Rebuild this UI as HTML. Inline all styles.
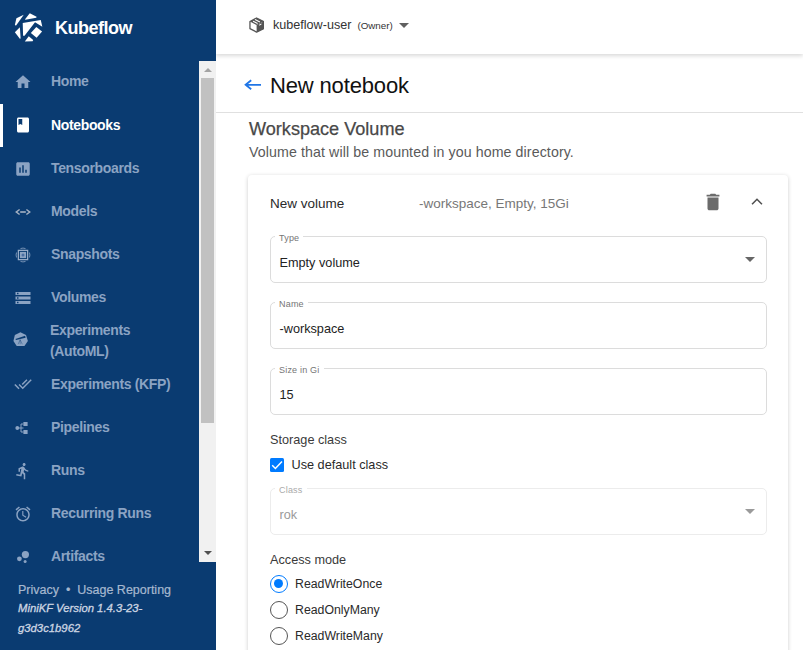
<!DOCTYPE html>
<html><head><meta charset="utf-8">
<style>
*{box-sizing:border-box;margin:0;padding:0}
html,body{width:803px;height:650px;overflow:hidden;background:#fff;font-family:"Liberation Sans",sans-serif;}
#side{position:absolute;left:0;top:0;width:216px;height:650px;background:#0a3b71;}
#main{position:absolute;left:216px;top:0;width:587px;height:650px;background:#fff;overflow:hidden}
.abs{position:absolute;white-space:nowrap}
.nav{position:absolute;left:51px;color:#8ba3c3;font-size:14px;font-weight:bold;white-space:nowrap;line-height:21px;letter-spacing:-0.35px}
.nav.act{color:#fff}
.ico{position:absolute;fill:#8ba3c3}
#sb{position:absolute;left:199px;top:61px;width:17px;height:501px;background:#f1f1f1}
#sb .thumb{position:absolute;left:2px;top:17px;width:13px;height:345px;background:#c1c1c1}

.fld{position:absolute;left:54px;width:497px;height:47px;border:1px solid #dcdcdc;border-radius:5px;background:#fff}
.fld .lb{position:absolute;left:4px;top:-5px;padding:0 4px;background:#fff;font-size:9px;line-height:12px;color:#757575;letter-spacing:.2px}
.fld .val{position:absolute;left:8.500px;top:17px;font-size:12.700px;line-height:18px;color:#222}
.fld .arr{position:absolute;left:474px;top:20px;width:0;height:0;border-left:5px solid transparent;border-right:5px solid transparent;border-top:5px solid #666}
.dis .lb{color:#aaa}.dis .val{color:#9a9a9a}.dis{border-color:#ececec}.dis .arr{border-top-color:#9a9a9a}
.t13{position:absolute;font-size:12.700px;line-height:18px;color:#2a2a2a;white-space:nowrap}
.radio{position:absolute;left:54px;width:18px;height:18px;border:1.500px solid #555;border-radius:50%;background:#fff}
.radio.on{border-color:#007bff}
.radio.on::after{content:"";position:absolute;left:3px;top:3px;width:9px;height:9px;border-radius:50%;background:#007bff}
</style></head><body>
<div id="side">
  <div class="abs" style="left:55px;top:15px;color:#fff;font-size:18px;font-weight:bold;line-height:26px;letter-spacing:-0.5px">Kubeflow</div>
  <div class="abs" style="left:0;top:104px;width:3px;height:43px;background:#fff"></div>
  <div class="nav" style="top:71px">Home</div>
  <div class="nav act" style="top:115px">Notebooks</div>
  <div class="nav" style="top:158px">Tensorboards</div>
  <div class="nav" style="top:201px">Models</div>
  <div class="nav" style="top:244px">Snapshots</div>
  <div class="nav" style="top:287px">Volumes</div>
  <div class="nav" style="top:320px;left:50px">Experiments<br>(AutoML)</div>
  <div class="nav" style="top:374px">Experiments (KFP)</div>
  <div class="nav" style="top:417px">Pipelines</div>
  <div class="nav" style="top:460px">Runs</div>
  <div class="nav" style="top:503px">Recurring Runs</div>
  <div class="nav" style="top:546px">Artifacts</div>
  <div class="abs" style="left:18px;top:581px;color:#a6b8cf;font-size:12.500px;line-height:18px;-webkit-text-stroke:0.2px #a6b8cf">Privacy &nbsp;•&nbsp; Usage Reporting</div>
  <div class="abs" style="left:18px;top:598px;color:#cdd6e3;-webkit-text-stroke:0.3px #cdd6e3;font-size:11.300px;line-height:20px;font-style:italic">MiniKF Version 1.4.3-23-<br>g3d3c1b962</div>
  <svg class="abs" style="left:12px;top:10px" width="34" height="34" viewBox="0 0 650 650" fill="#fff">
<polygon points="55,282 85,158 225,93 75,300"/>
<polygon points="250,178 340,62 470,130 465,150 255,187"/>
<polygon points="205,250 550,190 580,322 440,232 240,490 212,490"/>
<polygon points="360,440 465,325 575,410 470,530"/>
<polygon points="245,602 320,500 405,575 395,597"/>
<polygon points="55,425 150,330 165,545 150,550"/>
</svg>
  <svg class="abs" style="left:14px;top:73px" width="18" height="18" viewBox="0 0 24 24" fill="#8ba3c3"><path d="M10 20v-6h4v6h5v-8h3L12 3 2 12h3v8z"/></svg>
  <svg class="abs" style="left:14px;top:116px" width="18" height="18" viewBox="0 0 24 24" fill="#fff"><path d="M18 2H6c-1.100 0-2 .900-2 2v16c0 1.100.900 2 2 2h12c1.100 0 2-.900 2-2V4c0-1.100-.900-2-2-2zM6 4h5v8l-2.500-1.500L6 12V4z"/></svg>
  <svg class="abs" style="left:14px;top:160px" width="18" height="18" viewBox="0 0 24 24" fill="#8ba3c3"><path d="M19 3H5c-1.100 0-2 .900-2 2v14c0 1.100.900 2 2 2h14c1.100 0 2-.900 2-2V5c0-1.100-.900-2-2-2zM9 17H7v-7h2v7zm4 0h-2V7h2v10zm4 0h-2v-4h2v4z"/></svg>
  <svg class="abs" style="left:14px;top:203px" width="18" height="18" viewBox="0 0 18 18"><path d="M5.600,6.500 L2.300,9 L5.600,11.500 M12.400,6.500 L15.700,9 L12.400,11.500" stroke="#a5b1c2" stroke-width="1.500" fill="none"/><rect x="6.200" y="8.200" width="5.600" height="1.600" fill="#a5b1c2"/></svg>
  <svg class="abs" style="left:14px;top:246px" width="18" height="18" viewBox="0 0 18 18"><rect x="4.350" y="4.350" width="9.300" height="9.300" fill="none" stroke="#9db1cc" stroke-width="1.200"/><rect x="5.900" y="5.900" width="6.200" height="6.200" fill="#8ba3c3"/><circle cx="9" cy="9" r="1.500" fill="#4a6fa3"/><path d="M6.50,2.57 A6.9,6.9 0 0 1 11.50,2.57 M6.50,15.43 A6.9,6.9 0 0 0 11.50,15.43 M2.57,6.50 A6.9,6.9 0 0 0 2.57,11.50 M15.43,6.50 A6.9,6.9 0 0 1 15.43,11.50" fill="none" stroke="#7f98ba" stroke-width="0.900"/></svg>
  <svg class="abs" style="left:14px;top:289px" width="18" height="18" viewBox="0 0 24 24" fill="#8ba3c3"><path d="M2 20h20v-4H2v4zm2-3h2v2H4v-2zM2 4v4h20V4H2zm4 3H4V5h2v2zm-4 7h20v-4H2v4zm2-3h2v2H4v-2z"/></svg>
  <svg class="abs" style="left:13.400px;top:332.300px" width="15.200" height="14.400" viewBox="90 200 245 232" fill="#8ba3c3">
<polygon points="210,205 300,248 330,345 275,427 150,427 97,345 120,250"/>
<polygon points="130,314 285,262 294,294 138,328" fill="#0a3b71"/>
<path d="M205,325 L172,398 M205,325 L205,398 M205,325 L240,398" stroke="#0a3b71" stroke-width="6" fill="none"/>
</svg>
  <svg class="abs" style="left:14px;top:375px" width="18" height="18" viewBox="0 0 24 24" fill="#8ba3c3"><path d="M18 7l-1.410-1.410-6.340 6.340 1.410 1.410L18 7zm4.240-1.410L11.660 16.170 7.480 12l-1.410 1.410L11.660 19l12-12-1.420-1.410zM.410 13.410L6 19l1.410-1.410L1.830 12 .410 13.410z"/></svg>
  <svg class="abs" style="left:14px;top:419px" width="18" height="18" viewBox="0 0 18 18" fill="#8ba3c3">
<circle cx="3.300" cy="9" r="1.900"/><rect x="9.400" y="3" width="4.200" height="4"/><rect x="9.400" y="11" width="4.200" height="4"/>
<path d="M3 9H9.500M7 5H9.500M7 13H9.500M7 5V13" stroke="#8ba3c3" stroke-width="1" fill="none"/>
</svg>
  <svg class="abs" style="left:14px;top:462px" width="18" height="18" viewBox="0 0 24 24" fill="#8ba3c3"><path d="M13.490 5.480c1.100 0 2-.900 2-2s-.900-2-2-2-2 .900-2 2 .900 2 2 2zm-3.600 13.900l1-4.400 2.100 2v6h2v-7.500l-2.100-2 .600-3c1.300 1.500 3.300 2.500 5.500 2.500v-2c-1.900 0-3.500-1-4.300-2.400l-1-1.600c-.400-.600-1-1-1.700-1-.300 0-.500.100-.800.100l-5.200 2.200v4.700h2v-3.400l1.800-.700-1.600 8.100-4.900-1-.400 2 7 1.400z"/></svg>
  <svg class="abs" style="left:14px;top:505px" width="18" height="18" viewBox="0 0 24 24" fill="#8ba3c3"><path d="M22 5.720l-4.600-3.860-1.290 1.530 4.600 3.860L22 5.720zM7.880 3.390L6.600 1.860 2 5.710l1.290 1.530 4.590-3.850zM12.500 8H11v6l4.750 2.850.750-1.230-4-2.370V8zM12 4c-4.970 0-9 4.030-9 9s4.020 9 9 9c4.970 0 9-4.030 9-9s-4.030-9-9-9zm0 16c-3.870 0-7-3.130-7-7s3.130-7 7-7 7 3.130 7 7-3.130 7-7 7z"/></svg>
  <svg class="abs" style="left:14px;top:548px" width="18" height="18" viewBox="0 0 24 24" fill="#8ba3c3"><circle cx="7.200" cy="14.400" r="3.200"/><circle cx="14.800" cy="18" r="2"/><circle cx="15.200" cy="8.800" r="4.800"/></svg>
  <div id="sb"><div class="thumb"></div><div class="abs" style="left:5px;top:7px;border-left:4px solid transparent;border-right:4px solid transparent;border-bottom:4px solid #a3a3a3"></div><div class="abs" style="left:5px;top:490px;border-left:4px solid transparent;border-right:4px solid transparent;border-top:4px solid #505050"></div></div>
</div>
<div id="main">
  <div id="topbar" class="abs" style="left:0;top:0;width:587px;height:54px;background:#fff;box-shadow:0 2px 4px rgba(0,0,0,.15)"></div>
  <div class="abs" style="left:57px;top:16px;font-size:12.600px;color:#333;line-height:18px">kubeflow-user<span style="font-size:9.800px;margin-left:6px">(Owner)</span></div>
  <div class="abs" style="left:182.500px;top:23px;border-left:5px solid transparent;border-right:5px solid transparent;border-top:5px solid #606060"></div>
  <svg class="abs" style="left:32.700px;top:17.200px" width="15.700" height="15.700" viewBox="170 130 330 330">
    <polygon points="330,150 478,225 478,375 330,448 190,375 190,225" fill="#fff" stroke="#555" stroke-width="27" stroke-linejoin="round"/>
    <polygon points="330,300 478,225 478,375 330,448" fill="#555"/>
    <polygon points="330,150 478,225 330,300 190,225" fill="#555"/>
    <path d="M296,184 L400,236 M256,218 L350,266" stroke="#fff" stroke-width="23" fill="none"/>
    <polygon points="385,290 432,266 432,288 385,312" fill="#fff"/>
  </svg>
  <svg class="abs" style="left:26px;top:76.400px" width="22" height="18" viewBox="0 0 22 18"><path d="M19,8.800 H3.900 M9.200,4.300 L3.600,8.800 L9.200,13.300" stroke="#2076e6" stroke-width="1.800" fill="none"/></svg>
  <div class="abs" style="left:54px;top:71px;font-size:22px;color:#111;line-height:30px;letter-spacing:-0.15px">New notebook</div>
  <div class="abs" style="left:0;top:112px;width:587px;height:1px;background:#e0e0e0"></div>
  <div class="abs" style="left:33px;top:118px;font-size:18.100px;color:#484848;line-height:22px;-webkit-text-stroke:0.25px #484848">Workspace Volume</div>
  <div class="abs" style="left:33px;top:143px;font-size:14.200px;color:#5a5a5a;line-height:18px;letter-spacing:0.1px">Volume that will be mounted in you home directory.</div>
  <div id="card" class="abs" style="left:32px;top:175px;width:540px;height:500px;background:#fff;box-shadow:0 1px 4px rgba(0,0,0,.2);border-radius:4px"></div>
  <div class="t13" style="left:54px;top:195px;font-size:13.5px">New volume</div>
  <div class="t13" style="left:203px;top:195px;font-size:13.5px;color:#777">-workspace, Empty, 15Gi</div>
  <svg class="abs" style="left:486px;top:191px" width="22" height="22" viewBox="0 0 24 24"><path fill="#6b6b6b" d="M6 19c0 1.1.9 2 2 2h8c1.1 0 2-.9 2-2V7H6v12zM19 4h-3.500l-1-1h-5l-1 1H5v2h14V4z"/></svg>
  <svg class="abs" style="left:529.500px;top:191px" width="22" height="22" viewBox="0 0 24 24"><path fill="none" stroke="#505050" stroke-width="1.700" d="M6.600 14.400L12 9L17.400 14.400"/></svg>
  <div class="fld" style="top:236px"><span class="lb">Type</span><span class="val">Empty volume</span><span class="arr"></span></div>
  <div class="fld" style="top:302px"><span class="lb">Name</span><span class="val">-workspace</span></div>
  <div class="fld" style="top:368px"><span class="lb">Size in Gi</span><span class="val">15</span></div>
  <div class="t13" style="left:54px;top:431px;color:#3a3a3a">Storage class</div>
  <div class="abs" style="left:54px;top:458px;width:14px;height:14px;background:#007bff;border-radius:1.500px"></div>
  <svg class="abs" style="left:54px;top:458px" width="14" height="14" viewBox="0 0 14 14"><path d="M2.200 7.300L5.400 10.500L12 3.600" fill="none" stroke="#fff" stroke-width="1.500"/></svg>
  <div class="t13" style="left:75.500px;top:456px">Use default class</div>
  <div class="fld dis" style="top:488px;height:47px"><span class="lb">Class</span><span class="val">rok</span><span class="arr"></span></div>
  <div class="t13" style="left:54px;top:551px;color:#3a3a3a">Access mode</div>
  <div class="radio on" style="top:575px"></div><div class="t13" style="left:79px;top:575px;font-size:12.300px">ReadWriteOnce</div>
  <div class="radio" style="top:601px"></div><div class="t13" style="left:79px;top:601px;font-size:12.300px">ReadOnlyMany</div>
  <div class="radio" style="top:627px"></div><div class="t13" style="left:79px;top:627px;font-size:12.300px">ReadWriteMany</div>
</div>
</body></html>
